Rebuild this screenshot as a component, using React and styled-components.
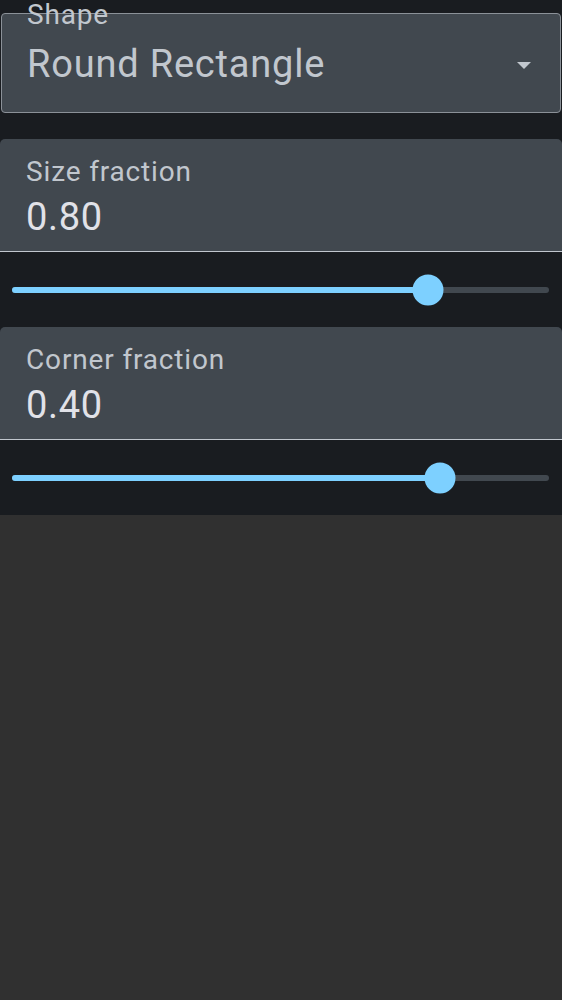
import React from "react";
import styled, { createGlobalStyle } from "styled-components";

const GlobalStyle = createGlobalStyle`
  html, body {
    margin: 0;
    padding: 0;
    background: #303030;
  }
  body {
    font-family: Roboto, "Noto Sans", "Liberation Sans", sans-serif;
    -webkit-font-smoothing: antialiased;
  }
`;

const sliders = [
  { label: "Size fraction", value: "0.80", pos: 0.775 },
  { label: "Corner fraction", value: "0.40", pos: 0.797 },
];

const App = () => {
  return (
    <>
      <GlobalStyle />
      <Panel>
        <SelectWrap>
          <SelectBox>
            <SelectLabel>Shape</SelectLabel>
            <SelectValue>Round Rectangle</SelectValue>
            <Arrow />
          </SelectBox>
        </SelectWrap>
        <Fields>
          {sliders.map((s) => (
            <div key={s.label}>
              <Field>
                <FieldLabel>{s.label}</FieldLabel>
                <FieldValue>{s.value}</FieldValue>
              </Field>
              <SliderRow>
                <Track>
                  <Active style={{ width: `${s.pos * 100}%` }} />
                  <Thumb style={{ left: `${s.pos * 100}%` }} />
                </Track>
              </SliderRow>
            </div>
          ))}
        </Fields>
      </Panel>
    </>
  );
};

const Panel = styled.div`
  background: #191c20;
  padding-top: 13px;
  width: 562px;
`;

const SelectWrap = styled.div`
  padding-left: 1px;
`;

const SelectBox = styled.div`
  position: relative;
  box-sizing: border-box;
  width: 560px;
  height: 100px;
  border: 1px solid #8b9198;
  border-radius: 4px;
  background: #41484f;
  padding: 31px 0 0 25px;
  display: flex;
  align-items: flex-start;
`;

const SelectLabel = styled.div`
  position: absolute;
  left: 25px;
  top: -13px;
  font-size: 28px;
  line-height: 28px;
  letter-spacing: 0.8px;
  color: #c1c7ce;
`;

const SelectValue = styled.div`
  flex: 1;
  font-size: 38px;
  line-height: 38px;
  letter-spacing: 0.8px;
  color: #c1c7ce;
`;

const Arrow = styled.div`
  width: 0;
  height: 0;
  margin: 17px 29px 0 0;
  border-left: 7.5px solid transparent;
  border-right: 7.5px solid transparent;
  border-top: 7px solid #c1c7ce;
`;

const Fields = styled.div`
  margin-top: 26px;
`;

const Field = styled.div`
  box-sizing: border-box;
  background: #41484f;
  border-radius: 5px 5px 0 0;
  border-bottom: 1px solid #c1c7ce;
  padding: 19px 26px 15px;
  display: flex;
  flex-direction: column;
  gap: 12px;
`;

const FieldLabel = styled.div`
  font-size: 28px;
  line-height: 28px;
  letter-spacing: 0.85px;
  color: #c1c7ce;
`;

const FieldValue = styled.div`
  font-size: 38px;
  line-height: 38px;
  letter-spacing: 0.7px;
  color: #e1e2e8;
`;

const SliderRow = styled.div`
  height: 75px;
  padding: 0 13px 0 12px;
  display: flex;
  align-items: center;
`;

const Track = styled.div`
  position: relative;
  flex: 1;
  height: 6px;
  border-radius: 3px;
  background: #41484f;
`;

const Active = styled.div`
  height: 100%;
  border-radius: 3px 0 0 3px;
  background: #7dd0ff;
`;

const Thumb = styled.div`
  position: absolute;
  top: 50%;
  width: 31px;
  height: 31px;
  border-radius: 50%;
  background: #7dd0ff;
  transform: translate(-50%, -50%);
`;

export default App;
